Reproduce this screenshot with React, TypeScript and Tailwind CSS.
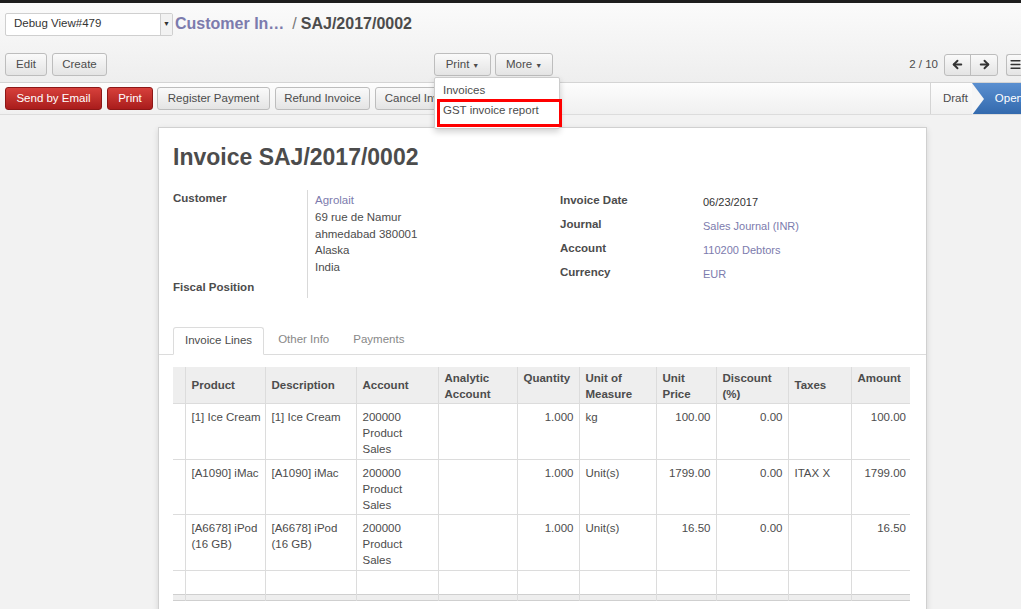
import { ArrowLeft, ArrowRight, Menu } from "lucide-react"

const font = "font-['Liberation_Sans',Arial,sans-serif]"

type BtnProps = { label: string; red?: boolean; caret?: boolean; className?: string }

function Btn({ label, red, caret, className = "" }: BtnProps) {
  return (
    <button
      className={`h-[23px] rounded-[3px] border text-[11.5px] leading-none flex items-center justify-center gap-[3px] whitespace-nowrap ${
        red
          ? "border-[#8d1717] text-white bg-gradient-to-b from-[#d7403b] to-[#a91c1c]"
          : "border-[#bdbdbd] text-[#4c4c4c] bg-gradient-to-b from-[#fafafa] to-[#e4e4e4]"
      } ${className}`}
    >
      {label}
      {caret && <span className="text-[7px] mt-[1px]">▼</span>}
    </button>
  )
}

const cols = [
  { name: "", w: "w-[12px]" },
  { name: "Product", w: "w-[80px]" },
  { name: "Description", w: "w-[91px]" },
  { name: "Account", w: "w-[82px]" },
  { name: "Analytic Account", w: "w-[79px]", top: true },
  { name: "Quantity", w: "w-[62px]", top: true },
  { name: "Unit of Measure", w: "w-[77px]", top: true },
  { name: "Unit Price", w: "w-[60px]", top: true },
  { name: "Discount (%)", w: "w-[72px]", top: true },
  { name: "Taxes", w: "w-[63px]" },
  { name: "Amount", w: "w-[60px]", top: true },
]

const rows = [
  ["", "[1] Ice Cream", "[1] Ice Cream", "200000 Product Sales", "", "1.000", "kg", "100.00", "0.00", "", "100.00"],
  ["", "[A1090] iMac", "[A1090] iMac", "200000 Product Sales", "", "1.000", "Unit(s)", "1799.00", "0.00", "ITAX X", "1799.00"],
  ["", "[A6678] iPod (16 GB)", "[A6678] iPod (16 GB)", "200000 Product Sales", "", "1.000", "Unit(s)", "16.50", "0.00", "", "16.50"],
]

const rightCols = [5, 7, 8, 10]

export default function App() {
  return (
    <div className={`${font} w-[1021px] h-[609px] overflow-hidden bg-[#f2f2f2] text-[#4c4c4c] text-[11.5px] flex flex-col`}>
      <div className="h-[3px] bg-[#1e1e1e] shrink-0" />

      {/* control panel */}
      <div className="h-[80px] shrink-0 bg-gradient-to-b from-[#fbfbfb] to-[#eeeeee] border-b border-[#d4d4d4] flex flex-col">
        <div className="flex items-center h-[36px] pt-[6px] pl-[5px]">
          <div className="w-[168px] h-[23px] bg-white border border-[#cfcfcf] rounded-[2px] flex items-center justify-between pl-[8px] text-[11.5px] text-[#333]">
            Debug View#479
            <span className="w-[12px] h-full border-l border-[#cfcfcf] bg-[#f2f2f2] text-[7px] flex items-center justify-center">▼</span>
          </div>
          <span className="ml-[2px] text-[16px] font-bold text-[#7c7bad]">Customer In…</span>
          <span className="ml-[8px] text-[16px] text-[#777]">/</span>
          <span className="ml-[4px] text-[16px] font-bold text-[#4c4c4c]">SAJ/2017/0002</span>
        </div>
        <div className="flex items-center mt-[14px] pl-[5px]">
          <div className="flex gap-[5px]">
            <Btn label="Edit" className="w-[42px]" />
            <Btn label="Create" className="w-[55px]" />
          </div>
          <div className="flex gap-[4px] ml-[327px] relative">
            <Btn label="Print" caret className="w-[57px]" />
            <Btn label="More" caret className="w-[58px]" />
            <div className="absolute left-0 top-[24px] w-[126px] bg-white border border-[#ccc] shadow-[0_3px_6px_rgba(0,0,0,0.18)] rounded-[2px] pt-[4px] pb-[6px] z-10 text-[11.5px] text-[#4c4c4c]">
              <div className="px-[8px] h-[18px] flex items-center">Invoices</div>
              <div className="relative px-[8px] h-[22px] flex items-center">
                GST invoice report
                <div className="absolute left-[2px] -right-[3px] top-[-1px] bottom-[-5px] border-[3px] border-[#f00]" />
              </div>
            </div>
          </div>
          <div className="ml-auto flex items-center">
            <span className="mr-[6px]">2 / 10</span>
            <div className="flex h-[22px] border border-[#bdbdbd] rounded-[3px] bg-gradient-to-b from-[#fafafa] to-[#e4e4e4]">
              <div className="w-[26px] flex items-center justify-center border-r border-[#bdbdbd]">
                <ArrowLeft size={13} strokeWidth={3.5} className="text-[#333]" />
              </div>
              <div className="w-[26px] flex items-center justify-center">
                <ArrowRight size={13} strokeWidth={3.5} className="text-[#333]" />
              </div>
            </div>
            <div className="ml-[8px] w-[15px] h-[22px] border border-r-0 border-[#bdbdbd] rounded-l-[3px] bg-gradient-to-b from-[#fafafa] to-[#e4e4e4] flex items-center pl-[2px] overflow-hidden">
              <Menu size={13} strokeWidth={3} className="text-[#333] shrink-0" />
            </div>
          </div>
        </div>
      </div>

      {/* status bar */}
      <div className="h-[32px] shrink-0 bg-gradient-to-b from-[#fdfdfd] to-[#f0f0f0] border-b border-[#dcdcdc] flex items-center pl-[5px]">
        <div className="flex gap-[4px]">
          <Btn label="Send by Email" red className="w-[97px]" />
          <Btn label="Print" red className="w-[46px] ml-[1px]" />
          <Btn label="Register Payment" className="w-[113px]" />
          <Btn label="Refund Invoice" className="w-[95px] ml-[1px]" />
          <Btn label="Cancel Invoice" className="w-[95px] ml-[1px]" />
        </div>
        <div className="ml-auto -mr-[30px] h-full flex items-stretch">
          <div className="border-l border-[#d4d4d4] pl-[12px] pr-[4px] flex items-center">Draft</div>
          <div className="relative pl-[23px] pr-[28px] flex items-center text-white bg-gradient-to-b from-[#5a8fd0] to-[#336aae]">
            <div className="absolute left-0 top-0 w-0 h-0 border-y-[16px] border-y-transparent border-l-[12px] border-l-[#f6f6f6]" />
            Open
          </div>
        </div>
      </div>

      {/* content */}
      <div className="flex-1 pt-[12px] pl-[158px]">
        <div className="w-[769px] bg-white border border-[#d0d0d0] shadow-[0_2px_6px_rgba(0,0,0,0.12)] pl-[14px] pr-[16px] pt-[14px] pb-[30px]">
          <h1 className="text-[23px] font-bold text-[#4c4c4c] leading-[30px]">Invoice SAJ/2017/0002</h1>

          <div className="flex mt-[18px]">
            <div className="w-[387px] flex">
              <div className="w-[134px] flex flex-col justify-between pb-[3px] font-bold">
                <div className="leading-[16px]">Customer</div>
                <div className="leading-[16px]">Fiscal Position</div>
              </div>
              <div className="border-l border-[#d9d9d9] pl-[7px] pt-[2px] pb-[22px] leading-[16.8px]">
                <div className="text-[#7c7bad]">Agrolait</div>
                <div>69 rue de Namur</div>
                <div>ahmedabad 380001</div>
                <div>Alaska</div>
                <div>India</div>
              </div>
            </div>
            <div className="flex flex-col gap-[8px] pt-[2px]">
              {[
                ["Invoice Date", "06/23/2017", false],
                ["Journal", "Sales Journal (INR)", true],
                ["Account", "110200 Debtors", true],
                ["Currency", "EUR", true],
              ].map(([l, v, link]) => (
                <div key={l as string} className="flex h-[16px] items-start">
                  <div className="w-[143px] font-bold">{l}</div>
                  <div className={`pt-[2px] text-[11px] ${link ? "text-[#7c7bad]" : "text-[#333]"}`}>{v}</div>
                </div>
              ))}
            </div>
          </div>

          {/* tabs */}
          <div className="mt-[29px] -ml-[14px] -mr-[16px] pl-[14px] border-b border-[#dcdcdc] flex h-[28px] items-end">
            <div className="h-[28px] px-[11px] flex items-center border border-[#dcdcdc] border-b-white rounded-t-[3px] bg-white -mb-px">
              Invoice Lines
            </div>
            <div className="h-[28px] px-[14px] flex items-center text-[#888]">Other Info</div>
            <div className="h-[28px] px-[10px] flex items-center text-[#888]">Payments</div>
          </div>

          {/* table */}
          <div className="mt-[12px] overflow-hidden w-[737px]">
            <table className="border-collapse table-fixed w-[738px]">
              <thead>
                <tr className="bg-[#eeeeee] h-[37px]">
                  {cols.map((c, i) => (
                    <th
                      key={i}
                      className={`${c.w} border-l border-[#dcdcdc] first:border-l-0 pl-[6px] pr-[3px] text-left font-bold leading-[16px] ${
                        c.top ? "align-top pt-[3px]" : "align-middle"
                      }`}
                    >
                      {c.name}
                    </th>
                  ))}
                </tr>
              </thead>
              <tbody>
                {rows.map((r, ri) => (
                  <tr key={ri} className={`${ri === 1 ? "h-[55px]" : "h-[56px]"} border-t border-[#dcdcdc]`}>
                    {r.map((v, ci) => (
                      <td
                        key={ci}
                        className={`border-l border-[#dcdcdc] first:border-l-0 align-top pt-[5px] leading-[16px] ${
                          rightCols.includes(ci) ? "text-right pl-[4px] pr-[5px]" : "text-left pl-[6px] pr-[3px]"
                        }`}
                      >
                        {ci === 3 ? v.split(" ").map((p) => <div key={p}>{p}</div>) : v}
                      </td>
                    ))}
                  </tr>
                ))}
                <tr className="h-[24px] border-t border-[#dcdcdc]">
                  {cols.map((_, i) => (
                    <td key={i} className="border-l border-[#dcdcdc] first:border-l-0" />
                  ))}
                </tr>
                <tr className="h-[6px] bg-[#eeeeee] border-y border-[#cfcfcf]">
                  {cols.map((_, i) => (
                    <td key={i} className="border-l border-[#dcdcdc] first:border-l-0" />
                  ))}
                </tr>
              </tbody>
            </table>
          </div>
        </div>
      </div>
    </div>
  )
}
